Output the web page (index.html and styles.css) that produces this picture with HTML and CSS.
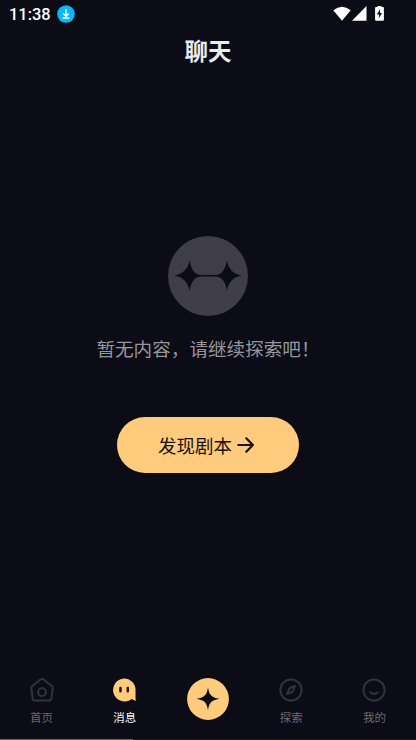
FILE: index.html
```html
<!DOCTYPE html>
<html lang="zh-CN">
<head>
<meta charset="utf-8">
<title>聊天</title>
<link rel="stylesheet" href="styles.css">
</head>
<body>
<div class="screen">
  <header class="status">
    <span class="time">11:38</span>
    <svg class="download" width="18" height="18" viewBox="0 0 18 18"><circle cx="9" cy="9" r="8.8" fill="#08b8f8"/><path d="M9 4v7M6.2 8.500 9 11.200l2.800-2.700M5.500 13h7" fill="none" stroke="#f0fcff" stroke-width="1.400"/></svg>
    <svg class="signals" width="54" height="18" viewBox="0 0 54 18" fill="#fff"><path d="M.3 5.2Q9-1.8 17.700 5.200L9 15.700Z"/><path d="M33.500 1v14.700H19Z"/><path d="M43 2H44.500V.9h4V2H50q.9 0 .9.900v11.900q0 .9-.9.900h-7q-.9 0-.9-.9V2.900q0-.9.9-.9Z"/><path d="m47.100 4-3.200 5.400h2.200l-.3 3.900 3.300-5.400h-2.200Z" fill="#0c0c17"/></svg>
  </header>
  <h1 class="title">聊天</h1>
  <main class="empty">
    <svg class="emblem" width="80" height="80" viewBox="0 0 80 80"><circle cx="40" cy="40" r="40" fill="#3f3e48"/><path d="M6 39.500C15 38 20 33 21.500 24.500 23 33 26.500 39 33.500 39H47C54 39 57.500 33 59 24.500 60.500 33 65 38 74 39.500 65 41 60.500 46 59 54.500 57.500 46 54 40.500 47 40.500H33.500C26.500 40.500 23 46 21.500 55 20 46 15 41 6 39.500Z" fill="#0c0c17"/></svg>
    <p class="message">暂无内容，请继续探索吧！</p>
    <button class="discover"><span>发现剧本</span><svg width="18" height="18" viewBox="0 0 18 18"><path d="M1.300 9h14.200M9.300 2.300 15.900 9l-6.600 6.700" fill="none" stroke="#17130f" stroke-width="2.200" stroke-linecap="round" stroke-linejoin="round"/></svg></button>
  </main>
  <nav class="tabs">
    <a class="tab"><svg width="24" height="24" viewBox="0 0 24 24" fill="none" stroke="#32313c" stroke-width="2"><path d="M10.400 1.500Q12 .3 13.600 1.500L21.700 8Q23 9.200 22.600 11L21.400 20.500Q20.900 22.600 18.500 22.600H5.500Q3.100 22.600 2.600 20.500L1.400 11Q1 9.200 2.300 8Z"/><circle cx="12" cy="14.200" r="3.900"/></svg><span>首页</span></a>
    <a class="tab active"><svg width="24" height="24" viewBox="0 0 24 24"><path d="M12 .5A11.500 11.500 0 0 1 23.500 12v7l.2 4.100-4-2.100A11.500 11.500 0 1 1 12 .5Z" fill="#ffcb7c"/><path d="M8.500 10v3.200M15.800 10v3.200" stroke="#1b1717" stroke-width="2.500" stroke-linecap="round"/></svg><span>消息</span></a>
    <a class="tab create"><svg width="42" height="42" viewBox="0 0 42 42"><circle cx="21" cy="21" r="20.900" fill="#ffcb7c"/><path d="M21 9.500C22.300 17 24 19.200 32.500 20.800 24 22.400 22.300 24.700 21 32.200 19.700 24.700 18 22.400 9.500 20.800 18 19.200 19.700 17 21 9.500Z" fill="#0c0c17"/></svg></a>
    <a class="tab"><svg width="24" height="24" viewBox="0 0 24 24" fill="none" stroke="#32313c" stroke-width="2"><circle cx="12" cy="12" r="10.600"/><path d="m16 8-5.300 2L8 16l5.300-2Z" stroke-linejoin="round"/></svg><span>探索</span></a>
    <a class="tab"><svg width="24" height="24" viewBox="0 0 24 24" fill="none" stroke="#32313c" stroke-width="2"><circle cx="12" cy="12" r="10.600"/><path d="M8 14.200q4 3.300 8 0" stroke-linecap="round"/></svg><span>我的</span></a>
  </nav>
  <div class="progress"></div>
</div>
</body>
</html>
```
FILE: styles.css
```css
* { box-sizing: border-box; }
body { margin: 0; background: #0c0c17; font-family: "Noto Sans CJK SC", sans-serif; }
.screen { width: 416px; height: 740px; display: flex; flex-direction: column; overflow: hidden; }
.status { height: 28px; display: flex; align-items: center; padding: 0 29px 0 9px; color: #fff; }
.time { font: 500 16.4px/28px Roboto, sans-serif; width: 48px; padding-top: 2px; }
.signals { margin-left: auto; }
.title { margin: 0; height: 46px; text-align: center; color: #ececef; font-size: 23.5px; line-height: 45px; font-weight: 700; }
.empty { flex: 1; display: flex; flex-direction: column; align-items: center; padding-top: 162px; }
.message { margin: 17px 0 0; height: 31px; font-size: 18.6px; line-height: 30px; color: #96969b; white-space: nowrap; }
.discover { margin-top: 53px; width: 182px; height: 56px; border: 0; border-radius: 28px; background: #ffcb7c; color: #17130f; display: flex; align-items: center; justify-content: center; gap: 5px; padding: 0 3px 0 0; font: 400 18.5px/28px "Noto Sans CJK SC", sans-serif; }
.tabs { height: 61px; display: grid; grid-template-columns: repeat(5, 1fr); }
.tab { display: flex; flex-direction: column; align-items: center; color: #696973; font-size: 11.5px; line-height: 18px; }
.tab span { margin-top: 6px; }
.active svg { margin-right: 1px; }
.active { color: #f3f3f4; }
.progress { height: 1px; background: linear-gradient(to right, #66666d 133px, #1b1b24 133px); }
```
